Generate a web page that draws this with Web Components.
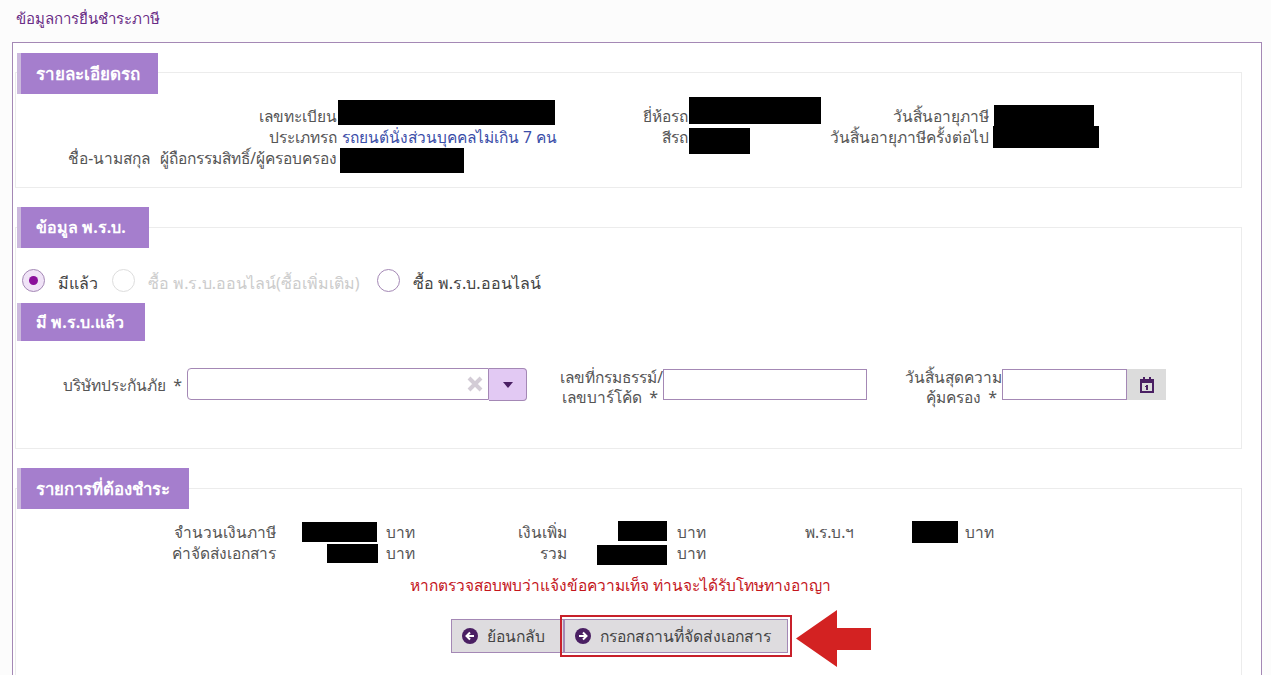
<!DOCTYPE html>
<html lang="th">
<head>
<meta charset="utf-8">
<title>ข้อมูลการยื่นชำระภาษี</title>
<style>
  html, body { margin: 0; height: 675px; overflow: hidden; }
  body { background: #fcfcfc; color: #555; font: 15.5px/21px Tahoma, "Noto Sans", "DejaVu Sans", "Liberation Sans", sans-serif; }
</style>
</head>
<body>
<tax-page>
  <page-title slot="title">ข้อมูลการยื่นชำระภาษี</page-title>
  <info-section heading="รายละเอียดรถ" tab="141" lap="22" size="17" body="116">
    <info-grid cols="321px 220px 131px 130px 171px 1fr" pad="12">
      <info-label>เลขทะเบียน</info-label><black-box w="217" h="25" dx="1" dy="-6"></black-box>
      <info-label>ยี่ห้อรถ</info-label><black-box w="132" h="27" dx="1" dy="-9"></black-box>
      <info-label>วันสิ้นอายุภาษี</info-label><black-box w="100" h="22" dx="5" dy="-1"></black-box>
      <info-label>ประเภทรถ</info-label><info-value>รถยนต์นั่งส่วนบุคคลไม่เกิน 7 คน</info-value>
      <info-label>สีรถ</info-label><black-box w="61" h="26" dx="1" dy="1"></black-box>
      <info-label>วันสิ้นอายุภาษีครั้งต่อไป</info-label><black-box w="106" h="22" dx="4" dy="-1"></black-box>
      <info-label style="word-spacing:6px">ชื่อ-นามสกุล ผู้ถือกรรมสิทธิ์/ผู้ครอบครอง</info-label><black-box w="124" h="25" dx="3" dy="0"></black-box>
    </info-grid>
  </info-section>
  <info-section heading="ข้อมูล พ.ร.บ." tab="132" lap="21" size="16" body="222">
    <radio-row>
      <radio-option checked style="margin-right:14px">มีแล้ว</radio-option>
      <radio-option disabled style="margin-right:17px">ซื้อ พ.ร.บ.ออนไลน์(ซื้อเพิ่มเติม)</radio-option>
      <radio-option>ซื้อ พ.ร.บ.ออนไลน์</radio-option>
    </radio-row>
    <sub-tab>มี พ.ร.บ.แล้ว</sub-tab>
    <form-row>
      <form-field lw="171" pt="1">บริษัทประกันภัย <i>*</i><select-box slot="input"></select-box></form-field>
      <form-field lw="136" pt="5">เลขที่กรมธรรม์/<br>เลขบาร์โค้ด <i>*</i><text-box slot="input"></text-box></form-field>
      <form-field lw="135" pt="5">วันสิ้นสุดความ<br>คุ้มครอง <i>*</i><date-box slot="input"></date-box></form-field>
    </form-row>
  </info-section>
  <info-section heading="รายการที่ต้องชำระ" tab="172" lap="21" size="16.8" body="200">
    <info-grid cols="260px 101px 90px 100px 100px 138px 107px 46px 1fr" pad="13">
      <info-label>จำนวนเงินภาษี</info-label><black-box end w="75" h="20" dx="0" dy="0"></black-box><baht-unit gap="9"></baht-unit>
      <info-label>เงินเพิ่ม</info-label><black-box end w="49" h="20" dx="0" dy="-1"></black-box><baht-unit gap="10"></baht-unit>
      <plain-label>พ.ร.บ.ฯ</plain-label><black-box end w="46" h="22" dx="0" dy="-1"></black-box><baht-unit gap="7"></baht-unit>
      <info-label>ค่าจัดส่งเอกสาร</info-label><black-box end w="51" h="19" dx="1" dy="1"></black-box><baht-unit gap="9"></baht-unit>
      <info-label>รวม</info-label><black-box end w="70" h="20" dx="0" dy="2"></black-box><baht-unit gap="10"></baht-unit>
    </info-grid>
    <warning-text>หากตรวจสอบพบว่าแจ้งข้อความเท็จ ท่านจะได้รับโทษทางอาญา</warning-text>
    <action-bar>
      <action-button dir="back" w="113">ย้อนกลับ</action-button>
      <action-button dir="next" w="224" highlight>กรอกสถานที่จัดส่งเอกสาร</action-button>
    </action-bar>
  </info-section>
</tax-page>

<script>
  (function() {
    // builds an element whose shadow markup may read its attributes
    let define = (name, html) => {
      customElements.define(name, class extends HTMLElement {
        connectedCallback() {
          if (this.shadowRoot) return;
          let a = n => this.getAttribute(n);
          this.attachShadow({mode: 'open'}).innerHTML = typeof html == 'function' ? html(a) : html;
        }
      });
    };
    let tabBg = '#a57ecd', tabEdge = '#cbb8dd', line = '#a488b5', ink = '#4a1f63';

    define('tax-page', `<style>
      :host{display:block}
      .frame{margin:0 9px 0 12px;border:1px solid ${line};border-bottom:0;background:#fff;padding:10px 19px 0 2px;height:633px;overflow:hidden;box-sizing:border-box;display:flex;flex-direction:column;gap:19px}
      </style><slot name="title"></slot><div class="frame"><slot></slot></div>`);
    define('page-title', `<style>:host{display:block;box-sizing:border-box;height:42px;padding:8px 0 0 16px;color:#6a2c86;font-size:15px}</style><slot></slot>`);
    define('info-section', a => `<style>
      :host{display:block;flex:none}
      .tab{position:relative;z-index:1;box-sizing:border-box;width:${a('tab')}px;height:41px;margin-left:2px;border-left:4px solid ${tabEdge};background:${tabBg};color:#fff;font-weight:bold;font-size:${a('size')}px;line-height:41px;padding-left:15px}
      .box{margin-top:-${a('lap')}px;border:1px solid #ececec;background:#fff;box-sizing:border-box;padding-top:${a('lap') - 1}px;height:${a('body')}px}
      </style><div class="tab">${a('heading')}</div><div class="box"><slot></slot></div>`);
    define('info-grid', a => `<style>
      :host{display:grid;grid-template-columns:${a('cols')};grid-auto-rows:21px;align-items:center;padding-top:${a('pad')}px}
      </style><slot></slot>`);
    define('info-label', `<style>:host{display:block;text-align:right;white-space:nowrap}</style><slot></slot>`);
    define('plain-label', `<style>:host{display:block;white-space:nowrap}</style><slot></slot>`);
    define('info-value', `<style>:host{display:block;white-space:nowrap;color:#3b4ea8;padding-left:5px}</style><slot></slot>`);
    define('baht-unit', a => `<style>:host{display:block;white-space:nowrap;padding-left:${a('gap')}px}</style>บาท`);
    // redaction block that sits over the row, like in the reference
    define('black-box', a => `<style>
      :host{display:block;position:relative;align-self:start;background:#000;width:${a('w')}px;height:${a('h')}px;left:${a('dx')}px;top:${a('dy')}px;z-index:1}
      :host([end]){justify-self:end}
      </style>`);
    define('radio-row', `<style>:host{display:flex;align-items:center;height:55px;padding:15px 0 0 6px;box-sizing:border-box;font-size:16px}</style><slot></slot>`);
    define('radio-option', `<style>
      :host{display:flex;align-items:center;color:#444;margin-right:16px}
      :host([disabled]){color:#ccc}
      .dot{box-sizing:border-box;width:23px;height:23px;border-radius:50%;border:1px solid ${line};background:#fff;margin-right:13px;display:grid;place-items:center;position:relative;top:-3px}
      :host([disabled]) .dot{border-color:#ddd}
      :host([checked]) .dot{background:#f0e3f7}
      :host([checked]) .dot::after{content:"";width:9px;height:9px;border-radius:50%;background:#8a0f9b}
      </style><span class="dot"></span><slot></slot>`);
    define('sub-tab', `<style>:host{display:block;box-sizing:border-box;width:128px;height:38px;margin-left:1px;border-left:4px solid ${tabEdge};background:${tabBg};color:#fff;font-weight:bold;font-size:16px;line-height:38px;padding-left:15px}</style><slot></slot>`);
    define('form-row', `<style>:host{display:flex;align-items:center;padding-top:21px}</style><slot></slot>`);
    define('form-field', a => `<style>
      :host{display:flex;align-items:center}
      .l{box-sizing:border-box;width:${a('lw')}px;text-align:right;line-height:20px;padding-top:${a('pt')}px}
      ::slotted(i){font-style:normal;font-size:16px;line-height:1;margin:0 5px 0 3px}
      </style><span class="l"><slot></slot></span><slot name="input"></slot>`);
    define('text-box', `<style>:host{display:block;box-sizing:border-box;width:204px;height:31px;border:1px solid ${line};background:#fff}</style>`);
    define('select-box', `<style>
      :host{display:flex}
      .i{box-sizing:border-box;width:302px;height:32px;border:1px solid ${line};border-radius:4px 0 0 4px;display:flex;align-items:center;justify-content:flex-end;padding-right:5px;background:#fff}
      .b{box-sizing:border-box;width:38px;height:33px;border:1px solid ${line};border-left:0;border-radius:0 4px 4px 0;background:#e2c9f3;display:grid;place-items:center}
      </style><div class="i"><svg width="16" height="16" viewBox="0 0 16 16"><path d="M2 2 14 14M14 2 2 14" stroke="#d3ccd6" stroke-width="4"/></svg></div>
      <div class="b"><svg width="10" height="6" viewBox="0 0 10 6"><path d="M0 0h10L5 6z" fill="${ink}"/></svg></div>`);
    define('date-box', `<style>
      :host{display:flex}
      .i{box-sizing:border-box;width:125px;height:31px;border:1px solid ${line};background:#fff}
      .b{width:39px;height:31px;background:#dcdcdc;display:grid;place-items:center}
      </style><div class="i"></div><div class="b"><svg width="14" height="16" viewBox="0 0 14 16"><path d="M1 3h12v12H1z" fill="none" stroke="${ink}" stroke-width="2"/><path d="M1 3h12v3H1zM3 0h2v4H3zM9 0h2v4H9z" fill="${ink}"/><path d="M6 8h2v5H6zM5 9h1v1H5z" fill="${ink}"/></svg></div>`);
    define('warning-text', `<style>:host{display:block;text-align:center;color:#c4161c;margin-top:11px;padding-right:16px}</style><slot></slot>`);
    define('action-bar', `<style>:host{display:flex;justify-content:center;margin-top:23px;padding-right:18px;font-size:15.7px}</style><slot></slot>`);
    define('action-button', a => {
      let back = a('dir') == 'back';
      let path = back ? 'M12 8H5M8 4.5 4.5 8 8 11.5' : 'M4 8h7M8 4.5 11.5 8 8 11.5';
      return `<style>
        :host{display:block;position:relative}
        .btn{box-sizing:border-box;width:${a('w')}px;height:34px;display:flex;align-items:center;gap:9px;padding-left:10px;background:#dedcdf;border:1px solid ${line};color:#444}
        :host([highlight]) .btn{outline:2px solid #c8202a;outline-offset:2px}
        svg.a{position:absolute;left:232px;top:-9px}
        </style><div class="btn"><svg width="16" height="16" viewBox="0 0 16 16"><circle cx="8" cy="8" r="8" fill="${ink}"/><path d="${path}" stroke="#fff" stroke-width="2" fill="none"/></svg><slot></slot></div>
        ${back ? '' : '<svg class="a" width="75" height="57" viewBox="0 0 75 57"><path d="M0 28.5 41 0v18h34v22H41v17z" fill="#d32222"/></svg>'}`;
    });
  })();
</script>
</body>
</html>
